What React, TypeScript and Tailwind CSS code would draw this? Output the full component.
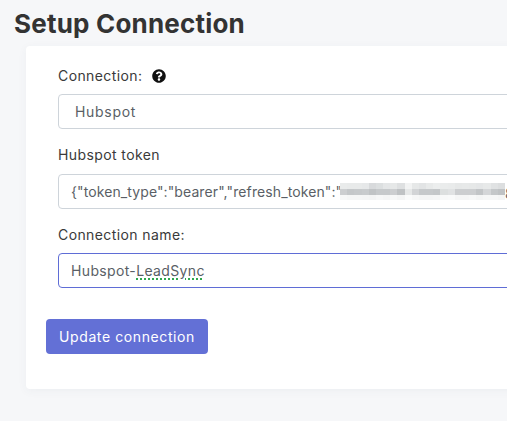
import React from 'react';
import { FaQuestionCircle } from 'react-icons/fa';

const font = "font-['Inter','Liberation_Sans',sans-serif]";

// mosaic over the token, one row per line of cells
const mosaic = [
  ['#e9ebeb', '#e8eaea', '#e8eaea', '#e6e8e9', '#d8dadc', '#dcdfe0', '#e4e6e7', '#e6e8e8', '#dee0e1', '#f2f3f3', '#e6e8e8', '#e2e4e5', '#e8eaea', '#eceeee', '#eaecec', '#e9ebeb', '#e6e8e8', '#e7e9e9', '#e6e8e8', '#e4e6e7', '#e7e9e9', '#e0e2e3', '#dcdedf'],
  ['#ccced0', '#c4c7c9', '#c6c9cb', '#c8cbcd', '#c0c3c5', '#c6c9cb', '#c6c9cb', '#ccced0', '#bfc2c4', '#e6e8e8', '#d2d4d6', '#c6c9cb', '#c6c9cb', '#c4c7c9', '#dcdfdf', '#e0e2e3', '#ccced0', '#ccced0', '#ccced0', '#c2c5c7', '#d4d6d8', '#c4c7c9', '#bfc2c4'],
  ['#f7f8f8', '#f5f6f6', '#f5f6f6', '#f4f5f5', '#f3f4f4', '#f6f7f7', '#f4f5f5', '#f7f8f8', '#f4f5f5', '#fafbfb', '#f6f7f7', '#f4f5f5', '#f4f5f5', '#f5f6f6', '#f8f9f9', '#f9fafa', '#f5f6f6', '#f5f6f6', '#f7f8f8', '#f4f5f5', '#f6f7f7', '#f6f7f7', '#f4f5f5'],
];

const Field = ({ label, children }: { label: React.ReactNode; children: React.ReactNode }) => (
  <div className="flex flex-col">
    <div className="h-[18px] flex items-center text-[14px] leading-[18px] text-[#3a3a3a] tracking-[0.4px]">{label}</div>
    {children}
  </div>
);

const App = () => {
  return (
    <div className={`w-[507px] h-[421px] overflow-hidden bg-[#f6f7f9] ${font}`}>
      <h1 className="pl-[14px] pt-[9px] h-[46px] text-[26px] leading-[30px] font-bold tracking-[0.2px] text-[#333333]">Setup Connection</h1>
      <div className="ml-[26px] w-[560px] h-[343px] bg-white rounded-[4px] shadow-[0_2px_10px_rgba(60,70,90,0.05)] pl-[32px] pr-[20px] pt-[21px]">
        <Field
          label={
            <span className="flex items-center gap-[10px]">
              Connection:
              <FaQuestionCircle className="w-[14px] h-[14px] text-[#111111]" />
            </span>
          }
        >
          <div className="mt-[9px] h-[35px] border border-[#ced4da] rounded-[4px] pl-[16px] flex items-center text-[14px] tracking-[0.7px] text-[#5a5f66]">Hubspot</div>
        </Field>
        <div className="mt-[17px]">
          <Field label="Hubspot token">
            <div className="relative mt-[10px] h-[35px] border border-[#ced4da] rounded-[4px] pl-[12px] flex items-center text-[14px] tracking-[0.1px] text-[#5a5f66] whitespace-nowrap overflow-hidden">
              {'{"token_type":"bearer","refresh_token":"'}
              <svg className="absolute left-[281px] top-[8px]" width="165" height="17" shapeRendering="crispEdges">
                {mosaic.map((row, r) =>
                  row.map((c, i) => (
                    <rect key={`${r}-${i}`} x={i * 7.17} y={[0, 6, 12][r]} width="7.2" height={[6, 6, 5][r]} fill={c} />
                  ))
                )}
              </svg>
              <span className="absolute left-[446px] top-[8px]">8</span>
            </div>
          </Field>
        </div>
        <div className="mt-[17px]">
          <Field label="Connection name:">
            <div className="mt-[9px] h-[35px] border border-[#5f6dd6] rounded-[4px] pl-[12px] flex items-center text-[14px] tracking-[0.35px] text-[#5a5f66]">
              Hubspot-<span className="underline decoration-dotted decoration-2 decoration-[#2fa84f] underline-offset-[2px]">LeadSync</span>
            </div>
          </Field>
        </div>
        <button className="-ml-[12px] mt-[31px] w-[162px] h-[35px] bg-[#6370d6] rounded-[4px] text-white text-[14px] tracking-[0.6px] flex items-center justify-center">
          Update connection
        </button>
      </div>
    </div>
  );
};

export default App;
